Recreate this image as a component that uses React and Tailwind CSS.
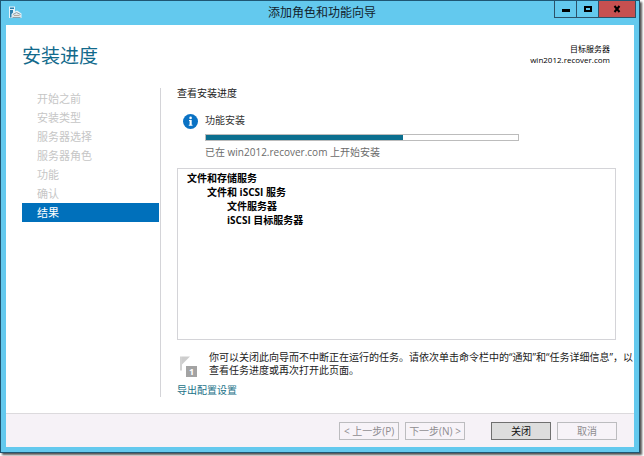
const steps = [
  '开始之前',
  '安装类型',
  '服务器选择',
  '服务器角色',
  '功能',
  '确认',
  '结果',
];

const installed = [
  {
    name: '文件和存储服务',
    children: [
      {
        name: '文件和 iSCSI 服务',
        children: [{ name: '文件服务器' }, { name: 'iSCSI 目标服务器' }],
      },
    ],
  },
];

const progress = 63;

const ServerIcon = () => (
  <svg className="w-[14px] h-[14px]" viewBox="0 0 14 14" fill="none" aria-hidden="true">
    <path d="M1 0.5h6v5l2-1 4.5 3v4.5H1z" fill="#e4f3fa" />
    <path d="M2 1.5h4v1.5H2zM2 4h3v2.5l-1.5 1.5v3.5H2z" fill="#2b7fae" />
    <path d="M4 8.5l4.5-2.5L13 8.5v3H4z" fill="#dfe6ea" />
    <path d="M5 8.5l3.5-2 4 2M4.5 11.5h8" stroke="#8ba0ab" />
    <path d="M6 9.5h5.5" stroke="#b4a99c" />
  </svg>
);

const InfoIcon = () => (
  <svg className="w-[15px] h-[15px] shrink-0" viewBox="0 0 15 15" aria-hidden="true">
    <circle cx="7.5" cy="7.5" r="7.5" fill="#0a72c4" />
    <circle cx="7.6" cy="3.9" r="1.3" fill="#fff" />
    <path d="M6 6.1h2.7v4.7h.8v1H5.8v-1h.8V7.1H6z" fill="#fff" />
  </svg>
);

// Notification flag with the number of pending tasks
const FlagIcon = () => (
  <div className="relative w-[17px] h-[21px] shrink-0">
    <svg className="w-[17px] h-[21px]" viewBox="0 0 17 21" aria-hidden="true">
      <path d="M0 0.5h2v14H0z" fill="#d2d2d2" />
      <path d="M2 0.5h8L2 8.5z" fill="#cdcdcd" />
    </svg>
    <span className="absolute right-0 bottom-0 w-[11px] h-[11px] bg-[#a3a3a3] text-white text-[9px] leading-[11px] font-bold text-center">
      1
    </span>
  </div>
);

const TitleBar = () => (
  <header className="flex items-start h-6 pl-[7px] pr-[3px]">
    <div className="flex-1 pt-[5px]">
      <ServerIcon />
    </div>
    <h1 className="text-[12px] leading-6 text-[#12222c]">添加角色和功能向导</h1>
    <div className="flex-1 flex justify-end">
      <div className="flex h-[17px] border border-t-0 border-[#2c5168] divide-x divide-[#2c5168]">
        <button type="button" aria-label="最小化" className="w-[22px] flex items-center justify-center">
          <svg className="w-2 h-2" viewBox="0 0 8 8">
            <path d="M0 4h8v3H0z" fill="#000" />
          </svg>
        </button>
        <button type="button" aria-label="最大化" className="w-[22px] flex items-center justify-center">
          <svg className="w-2 h-2" viewBox="0 0 8 8" fill="none">
            <path d="M1 2h6v4H1z" stroke="#000" strokeWidth="2" />
          </svg>
        </button>
        <button type="button" aria-label="关闭窗口" className="w-9 flex items-center justify-center bg-[#c75050]">
          <svg className="w-2 h-2" viewBox="0 0 8 8" fill="none">
            <path d="M1.5 1l5 6M6.5 1l-5 6" stroke="#000" strokeWidth="2" />
          </svg>
        </button>
      </div>
    </div>
  </header>
);

const FeatureList = ({ items }) => (
  <ul>
    {items.map((item) => (
      <li key={item.name}>
        {item.name}
        {item.children && (
          <div className="pl-5">
            <FeatureList items={item.children} />
          </div>
        )}
      </li>
    ))}
  </ul>
);

const FooterButton = ({ children, disabled }) => (
  <button
    type="button"
    disabled={disabled}
    className="w-[60px] h-[18px] border border-[#707070] bg-[#dddddd] text-[#111] text-[10px] leading-4 whitespace-nowrap disabled:border-[#bcbcbf] disabled:bg-[#f7f3f8] disabled:text-[#8e8c90]"
  >
    {children}
  </button>
);

const App = () => {
  const current = '结果';

  return (
    <div
      lang="zh-CN"
      className="min-h-screen flex bg-white pr-1 pb-[3px] text-[10px] text-[#222] font-['Open_Sans','Noto_Sans_CJK_SC',sans-serif]"
    >
      <div className="flex-1 flex flex-col border border-[#1f5673] bg-[#63c9ee] shadow-[2px_2px_2px_#555]">
        <TitleBar />
        <div className="flex-1 flex flex-col mx-[5px] mb-[5px] bg-white">
          <main className="flex-1 flex flex-col pt-[18px] pl-4 pr-[18px] pb-4">
            <div className="flex justify-between items-start h-[45px] pr-[6px]">
              <h2 className="text-[19px] leading-[26px] text-[#126a8c]">安装进度</h2>
              <div className="text-right text-[8px] leading-[11px] text-black">
                <p>目标服务器</p>
                <p>win2012.recover.com</p>
              </div>
            </div>

            <div className="flex-1 flex">
              <nav className="w-[139px] shrink-0 pt-px pr-px border-r border-[#d4d4d8]">
                {steps.map((step) => (
                  <button
                    key={step}
                    type="button"
                    disabled={step !== current}
                    className="block w-full h-[19px] pl-[15px] text-left text-[11px] leading-[19px] bg-[#0070bb] text-white disabled:bg-transparent disabled:text-[#c6c6c6]"
                  >
                    {step}
                  </button>
                ))}
              </nav>

              <section className="flex-1 min-w-0 flex flex-col pl-4">
                <h3 className="leading-[11px]">查看安装进度</h3>

                <div className="flex gap-[7px] pl-[6px] pt-[15px]">
                  <InfoIcon />
                  <div className="flex-1">
                    <p className="leading-[13px] text-[#333]">功能安装</p>
                    <div
                      role="progressbar"
                      aria-label="功能安装"
                      aria-valuenow={progress}
                      className="mt-[7px] w-[314px] max-w-full h-[7px] border border-[#bcbcbc]"
                    >
                      <div className="h-full bg-[#0b6f8f]" style={{ width: `${progress}%` }} />
                    </div>
                    <p className="mt-1 leading-[14px] text-[#6b6b6b]">已在 win2012.recover.com 上开始安装</p>
                  </div>
                </div>

                <div className="flex-1 mt-[9px] pt-[2px] pl-[9px] border border-[#d4d4d8] leading-[14px] font-bold text-black">
                  <FeatureList items={installed} />
                </div>

                <div className="flex items-end gap-3 pl-[3px] pt-[11px] -mr-[18px]">
                  <FlagIcon />
                  <p className="leading-[13px]">
                    你可以关闭此向导而不中断正在运行的任务。请依次单击命令栏中的“通知”和“任务详细信息”，以查看任务进度或再次打开此页面。
                  </p>
                </div>

                <a href="#export" className="self-start mt-[7px] leading-[13px] text-[#1b7288]">
                  导出配置设置
                </a>
              </section>
            </div>
          </main>

          <footer className="flex justify-end items-center h-[34px] pr-[17px] border-t border-[#dcdadd] bg-[#f6f2f7]">
            <div className="flex gap-[6px] mr-[26px]">
              <FooterButton disabled>&lt; 上一步(P)</FooterButton>
              <FooterButton disabled>下一步(N) &gt;</FooterButton>
            </div>
            <div className="flex gap-[6px]">
              <FooterButton>关闭</FooterButton>
              <FooterButton disabled>取消</FooterButton>
            </div>
          </footer>
        </div>
      </div>
    </div>
  );
};

export default App;
